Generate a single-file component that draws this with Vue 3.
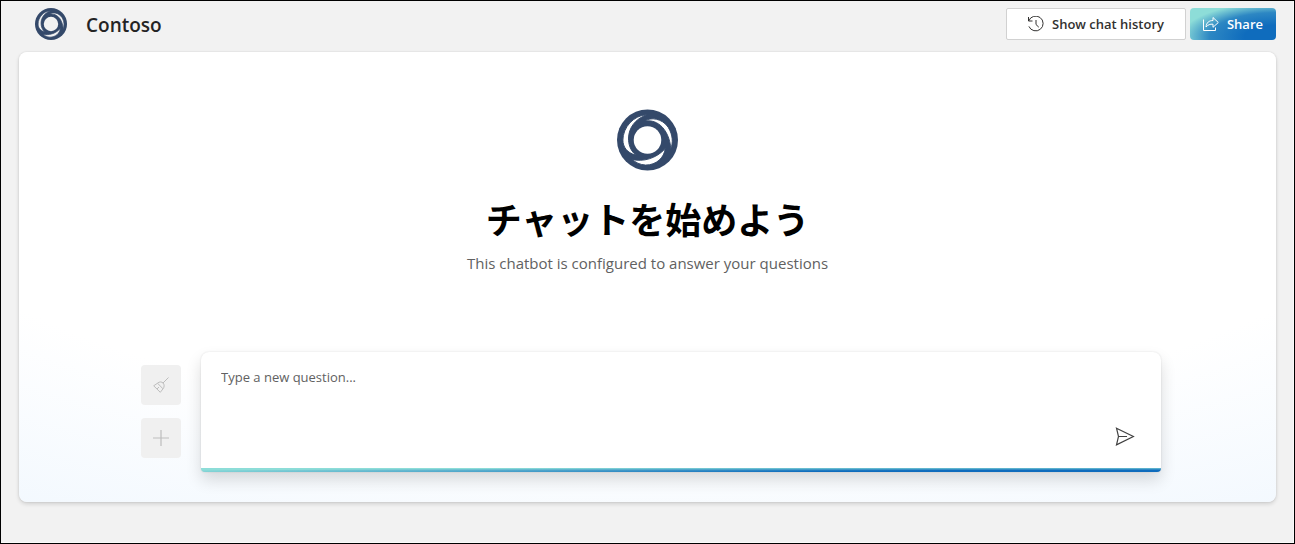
<script setup>
import { ref } from 'vue'

const question = ref('')

const blades = [
  'M30 5.3C17 6 6 18 6 31C6 38 10 44 19 46.3C13 41 11.7 35 11.7 29C12 19 18 10 30 5.3Z',
  'M28.3 11.7C34 7.5 46 9 52 18C57 26 57 34 54.7 40C54 30 50 21 44 16C39 12 34 11 28.3 11.7Z',
  'M15.7 50.7C26 53.5 40 50 49 39.7C48 49 40 56.5 29 56.5C23 56 19 54 15.7 50.7Z',
].join('')
</script>

<template>
  <div class="app">
    <header class="header">
      <a class="brand" href="#">
        <svg class="brand-logo" viewBox="0 0 62 62" aria-hidden="true">
          <circle cx="31" cy="31" r="31" fill="#34496a" />
          <circle cx="31" cy="31" r="14" fill="#f2f2f2" />
          <path :d="blades" fill="#f2f2f2" stroke="#34496a" stroke-width="1.4" />
        </svg>
        <span class="brand-name">Contoso</span>
      </a>
      <div class="actions">
        <button class="history" type="button">
          <svg viewBox="0 0 16 16" width="16" height="16" fill="none" stroke="currentColor" aria-hidden="true">
            <path d="M.5 1V5H4.5M.8 4.8A7.4 7.4 0 1 1 .9 10.4M8 4V8.5L10.8 11.2" />
          </svg>
          Show chat history
        </button>
        <button class="share" type="button">
          <svg viewBox="0 0 16 16" width="16" height="16" fill="none" stroke="currentColor" aria-hidden="true">
            <path d="M.5 3.5V14.5H12.5V11.5M3 11C3.5 6.5 6 4.5 10 4.5V1.5L15.3 6.5L10 11.3V8.2C7 8 5 8.7 3 11Z" />
          </svg>
          Share
        </button>
      </div>
    </header>

    <main class="chat">
      <section class="empty">
        <svg class="empty-logo" viewBox="0 0 62 62" aria-hidden="true">
          <circle cx="31" cy="31" r="31" fill="#34496a" />
          <circle cx="31" cy="31" r="14" fill="#fff" />
          <path :d="blades" fill="#fff" stroke="#34496a" />
        </svg>
        <h1 lang="ja">チャットを始めよう</h1>
        <p>This chatbot is configured to answer your questions</p>
      </section>

      <form class="composer" @submit.prevent>
        <div class="tools">
          <button type="button" disabled aria-label="Clear chat">
            <svg viewBox="0 0 16 16" width="16" height="16" fill="none" stroke="currentColor" aria-hidden="true">
              <path d="M15.5 .5L10 6M4.5 6.2C6.5 4.3 9 4.8 10 6C11.5 7.5 11.5 10 10 11.8M4.5 6.2L10 11.8M4.5 6.2L.7 8.8L7.3 15.3L10 11.8M4 12L6 10" />
            </svg>
          </button>
          <button type="button" disabled aria-label="New chat">
            <svg viewBox="0 0 16 16" width="16" height="16" fill="none" stroke="currentColor" stroke-width="1.2" aria-hidden="true">
              <path d="M8 0V16M0 8H16" />
            </svg>
          </button>
        </div>
        <div class="box">
          <textarea v-model="question" placeholder="Type a new question..." aria-label="Question"></textarea>
          <button class="send" type="submit" aria-label="Send">
            <svg viewBox="0 0 20 20" width="20" height="20" fill="none" stroke="currentColor" stroke-width="1.2" aria-hidden="true">
              <path d="M1.5 1.2L18.4 9.5L1.5 17.8L3.5 9.5ZM3.5 9.5H12" />
            </svg>
          </button>
        </div>
      </form>
    </main>
  </div>
</template>

<style>
body {
  margin: 0;
}
</style>

<style scoped>
.app {
  box-sizing: border-box;
  min-height: 100vh;
  display: flex;
  flex-direction: column;
  padding: 7px 18px 41px;
  border: 1px solid #000;
  background: #f2f2f2;
  box-shadow: inset -1px -1px #fafafa;
  font-family: "Open Sans", "Noto Sans", "Noto Sans CJK JP", sans-serif;
  color: #242424;
}

button {
  font-family: inherit;
  cursor: pointer;
}

.header {
  display: flex;
  align-items: center;
  justify-content: space-between;
  height: 32px;
  margin-bottom: 12px;
}

.brand {
  display: flex;
  align-items: center;
  gap: 19px;
  margin-left: 16px;
  color: inherit;
  text-decoration: none;
}

.brand-logo {
  width: 32px;
  height: 32px;
}

.brand-name {
  padding-top: 2px;
  font-size: 19px;
  font-weight: 600;
  line-height: 28px;
}

.actions {
  display: flex;
  gap: 4px;
}

.history,
.share {
  display: flex;
  align-items: center;
  justify-content: center;
  gap: 8px;
  box-sizing: border-box;
  height: 32px;
  font-size: 13px;
  font-weight: 600;
  line-height: 20px;
  white-space: nowrap;
}

.history {
  width: 180px;
  border: 1px solid #d1d1d1;
  border-radius: 2px;
  background: #fff;
  color: #323130;
}

.share {
  width: 86px;
  border: 0;
  border-radius: 4px;
  background: radial-gradient(109.81% 107.82% at 100.1% 90.19%, #0f6cbd 33.63%, #2d87c3 70.31%, #8dddd8 100%);
  color: #fff;
}

.chat {
  flex: 1;
  display: flex;
  flex-direction: column;
  border-radius: 8px;
  background: radial-gradient(108.78% 108.78% at 50.02% 19.78%, #fff 57.29%, #eef6fe 100%);
  box-shadow: 0 2px 4px rgba(0, 0, 0, 0.14), 0 0 2px rgba(0, 0, 0, 0.12);
}

.empty {
  flex: 1;
  display: flex;
  flex-direction: column;
  align-items: center;
  padding-top: 57px;
}

.empty-logo {
  width: 61px;
  height: 62px;
}

h1 {
  margin: 23px 0 0;
  font-family: "Noto Sans CJK JP", sans-serif;
  font-size: 36px;
  font-weight: 700;
  line-height: 48px;
  color: #000;
}

p {
  margin: 10px 0 0;
  font-size: 15px;
  line-height: 22px;
  color: #616161;
}

.composer {
  display: flex;
  align-items: center;
  gap: 20px;
  margin: 0 115px 30px 122px;
}

.tools {
  display: flex;
  flex-direction: column;
  gap: 13px;
  padding-bottom: 2px;
}

.tools button {
  display: grid;
  place-items: center;
  width: 40px;
  height: 40px;
  padding: 0;
  border: 0;
  border-radius: 4px;
  background: #f0f0f0;
  color: #bdbdbd;
}

.box {
  flex: 1;
  display: flex;
  box-sizing: border-box;
  height: 120px;
  overflow: hidden;
  border-radius: 8px 8px 4px 4px;
  background:
    radial-gradient(106.04% 106.06% at 100.1% 90.19%, #0f6cbd 33.63%, #8dddd8 100%) bottom / 100% 4px no-repeat,
    #fff;
  box-shadow: 0 8px 16px rgba(0, 0, 0, 0.14), 0 0 2px rgba(0, 0, 0, 0.12);
}

textarea {
  flex: 1;
  margin: 15px 0 16px 20px;
  padding: 0;
  border: 0;
  outline: 0;
  resize: none;
  background: transparent;
  font-family: inherit;
  font-size: 13px;
  line-height: 20px;
  color: #242424;
}

textarea::placeholder {
  color: #616161;
}

.send {
  align-self: flex-end;
  width: 20px;
  height: 20px;
  margin: 0 26px 25px 12px;
  padding: 0;
  border: 0;
  background: none;
  color: #424242;
}

.send svg {
  display: block;
}
</style>
